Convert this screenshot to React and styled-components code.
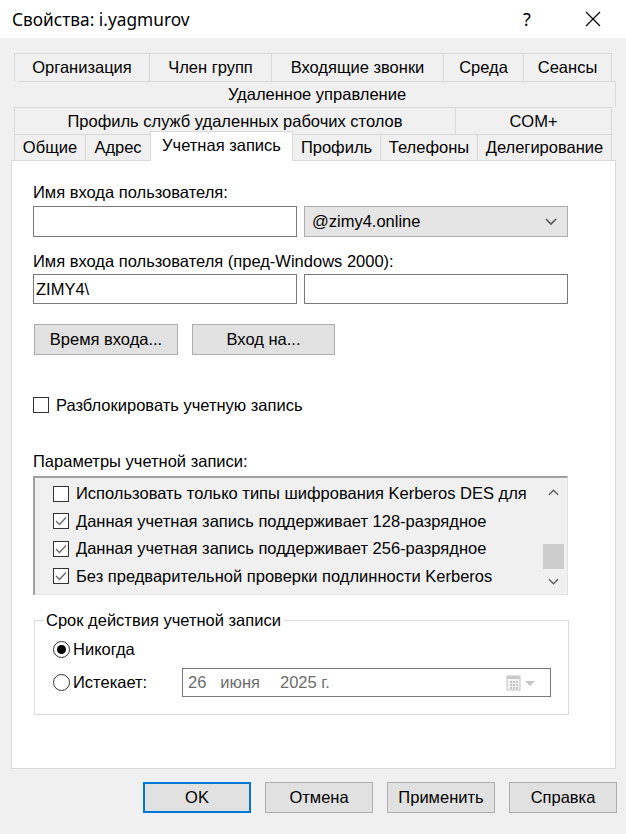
import React from 'react';
import styled, { createGlobalStyle } from 'styled-components';

const GlobalStyle = createGlobalStyle`
  html, body {
    margin: 0;
    padding: 0;
    background: #f0f0f0;
  }
  * {
    box-sizing: border-box;
  }
`;

const Window = styled.div`
  width: 626px;
  height: 834px;
  background: #f0f0f0;
  font-family: "Liberation Sans", Arial, sans-serif;
  font-size: 16.5px;
  color: #000;
  overflow: hidden;
`;

const TitleBar = styled.div`
  height: 38px;
  background: #fff;
  display: flex;
  align-items: center;
  padding-left: 12px;
`;

const Title = styled.div`
  flex: 1;
  font-family: "Noto Sans", "Open Sans", sans-serif;
  font-size: 17.3px;
  color: #000;
`;

const TitleButton = styled.div`
  width: 46px;
  height: 38px;
  display: flex;
  align-items: center;
  justify-content: center;
  font-family: "Noto Sans", sans-serif;
  font-size: 18px;
  margin-right: ${(p) => p.$mr || 0}px;
`;

const Tabs = styled.div`
  margin-top: 15px;
  display: flex;
  flex-direction: column;
`;

const TabRow = styled.div`
  display: flex;
  height: ${(p) => p.$h}px;
  margin-left: ${(p) => p.$ml || 14}px;
  width: 598px;
`;

const Tab = styled.div`
  width: ${(p) => p.$w}px;
  flex: ${(p) => (p.$w ? 'none' : 1)};
  display: flex;
  align-items: center;
  justify-content: center;
  border: 1px solid #d9d9d9;
  border-right: none;
  border-bottom: none;
  border-left-color: ${(p) => (p.$noLeft ? 'transparent' : '#d9d9d9')};
  background: #f0f0f0;
  white-space: nowrap;
  &:last-child {
    border-right: 1px solid #d9d9d9;
  }
`;

const ActiveTab = styled(Tab)`
  background: #fff;
  margin-top: -3px;
  height: 30px;
  padding-bottom: 3px;
  position: relative;
  z-index: 1;
  border-right: 1px solid #d9d9d9;
  & + div {
    border-left: none;
  }
`;

const Panel = styled.div`
  margin-left: 11px;
  width: 605px;
  height: 609px;
  background: #fff;
  border: 1px solid #d9d9d9;
  padding: 22px 0 0 21px;
`;

const Label = styled.div`
  height: 18px;
  line-height: 18px;
  margin-top: ${(p) => p.$mt || 0}px;
  white-space: nowrap;
`;

const FieldRow = styled.div`
  display: flex;
  gap: 7px;
  height: ${(p) => p.$h}px;
  margin-top: ${(p) => p.$mt}px;
`;

const TextInput = styled.div`
  width: 264px;
  height: 100%;
  border: 1px solid #7a7a7a;
  background: #fff;
  display: flex;
  align-items: center;
  padding-left: 2px;
`;

const Select = styled.div`
  width: 264px;
  height: 100%;
  border: 1px solid #adadad;
  background: #e5e5e5;
  display: flex;
  align-items: center;
  padding: 0 10px 0 7px;
  justify-content: space-between;
`;

const ButtonRow = styled.div`
  display: flex;
  gap: 14px;
  margin-top: ${(p) => p.$mt}px;
  justify-content: ${(p) => p.$justify || 'flex-start'};
  padding-right: ${(p) => p.$pr || 0}px;
  padding-left: ${(p) => p.$pl || 0}px;
`;

const Button = styled.div`
  width: ${(p) => p.$w}px;
  height: ${(p) => p.$h || 31}px;
  background: #e1e1e1;
  border: ${(p) => (p.$primary ? '2px solid #0078d7' : '1px solid #adadad')};
  display: flex;
  align-items: center;
  justify-content: center;
`;

const CheckRow = styled.div`
  display: flex;
  align-items: center;
  gap: 7px;
  height: ${(p) => p.$h || 18}px;
  margin-top: ${(p) => p.$mt || 0}px;
  white-space: nowrap;
`;

const Box = styled.div`
  width: 16px;
  height: 16px;
  flex: none;
  border: 1px solid #333;
  background: #fff;
  display: flex;
  align-items: center;
  justify-content: center;
`;

const ListBox = styled.div`
  margin-top: 6px;
  width: 535px;
  height: 119px;
  border-top: 2px solid #a0a0a0;
  border-left: 2px solid #a0a0a0;
  border-right: 1px solid #e3e3e3;
  border-bottom: 1px solid #e3e3e3;
  background: #f0f0f0;
  display: flex;
  overflow: hidden;
`;

const ListItems = styled.div`
  flex: 1;
  padding: 2px 0 0 18px;
  overflow: hidden;
`;

const ScrollBar = styled.div`
  width: 24px;
  margin-right: 2px;
  display: flex;
  flex-direction: column;
`;

const ScrollArrow = styled.div`
  height: ${(p) => p.$h}px;
  display: flex;
  align-items: center;
  justify-content: center;
`;

const ScrollTrack = styled.div`
  flex: 1;
  display: flex;
  flex-direction: column;
  justify-content: flex-end;
  align-items: center;
`;

const Thumb = styled.div`
  width: 21px;
  height: 25px;
  background: #cdcdcd;
`;

const Group = styled.fieldset`
  margin: 16px 0 0 1px;
  width: 535px;
  height: 104px;
  border: 1px solid #dcdcdc;
  padding: 11px 0 0 18px;
`;

const Legend = styled.legend`
  padding: 0 2px;
  margin-left: -9px;
  height: 18px;
  line-height: 18px;
`;

const Radio = styled.div`
  width: 17px;
  height: 17px;
  flex: none;
  border-radius: 50%;
  border: 1px solid #333;
  background: #fff;
  display: flex;
  align-items: center;
  justify-content: center;
  &::after {
    content: '';
    display: ${(p) => (p.$checked ? 'block' : 'none')};
    width: 9px;
    height: 9px;
    border-radius: 50%;
    background: #000;
  }
`;

const RadioRow = styled.div`
  display: flex;
  align-items: center;
  gap: 3px;
  height: ${(p) => p.$h}px;
  margin-top: ${(p) => p.$mt || 0}px;
`;

const RadioLabel = styled.div`
  width: ${(p) => p.$w || 'auto'};
`;

const DatePicker = styled.div`
  width: 369px;
  height: 29px;
  border: 1px solid #7a7a7a;
  background: #fff;
  display: flex;
  align-items: center;
  padding: 0 12px 0 5px;
  color: #6d6d6d;
  gap: 6px;
`;

const DatePart = styled.span`
  margin-right: ${(p) => p.$mr}px;
`;

const Spacer = styled.div`
  flex: 1;
`;

const Check = () => (
  <svg width="12" height="10" viewBox="0 0 12 10">
    <polyline points="1,5 4.5,8.5 11,1.5" fill="none" stroke="#6a6a6a" strokeWidth="1.4" />
  </svg>
);

const Chevron = ({ up, color = '#555', w = 12 }) => (
  <svg width={w} height="8" viewBox="0 0 12 8">
    <polyline
      points={up ? '1,7 6,2 11,7' : '1,1 6,6 11,1'}
      fill="none"
      stroke={color}
      strokeWidth="1.6"
    />
  </svg>
);

const CalendarIcon = () => (
  <svg width="32" height="18" viewBox="0 0 32 18">
    <rect x="1" y="2" width="13" height="14" fill="#f4f4f4" stroke="#c4c4c4" />
    <rect x="1" y="2" width="13" height="3" fill="#c9c9c9" />
    {[4, 7, 10].map((x) =>
      [7, 10, 13].map((y) => (
        <rect key={`${x}-${y}`} x={x} y={y} width="2" height="2" fill="#c4c4c4" />
      ))
    )}
    <polygon points="19,7 29,7 24,12" fill="#c4c4c4" />
  </svg>
);

const listItems = [
  { text: 'Использовать только типы шифрования Kerberos DES для', checked: false },
  { text: 'Данная учетная запись поддерживает 128-разрядное', checked: true },
  { text: 'Данная учетная запись поддерживает 256-разрядное', checked: true },
  { text: 'Без предварительной проверки подлинности Kerberos', checked: true },
];

const ListRow = styled(CheckRow)`
  height: 27.5px;
`;

function App() {
  return (
    <Window>
      <GlobalStyle />
      <TitleBar>
        <Title>Свойства: i.yagmurov</Title>
        <TitleButton $mr={20}>?</TitleButton>
        <TitleButton $mr={10}>
          <svg width="16" height="16" viewBox="0 0 16 16">
            <path d="M1 1 L15 15 M15 1 L1 15" stroke="#000" strokeWidth="1.2" />
          </svg>
        </TitleButton>
      </TitleBar>

      <Tabs>
        <TabRow $h={28}>
          <Tab $w={135}>Организация</Tab>
          <Tab $w={122}>Член групп</Tab>
          <Tab $w={172}>Входящие звонки</Tab>
          <Tab $w={80}>Среда</Tab>
          <Tab $w={89}>Сеансы</Tab>
        </TabRow>
        <TabRow $h={26} $ml={18}>
          <Tab $noLeft>Удаленное управление</Tab>
        </TabRow>
        <TabRow $h={27}>
          <Tab $w={441}>Профиль служб удаленных рабочих столов</Tab>
          <Tab $w={157}>COM+</Tab>
        </TabRow>
        <TabRow $h={26}>
          <Tab $w={71}>Общие</Tab>
          <Tab $w={65}>Адрес</Tab>
          <ActiveTab $w={143}>Учетная запись</ActiveTab>
          <Tab $w={87}>Профиль</Tab>
          <Tab $w={97}>Телефоны</Tab>
          <Tab $w={135}>Делегирование</Tab>
        </TabRow>
      </Tabs>

      <Panel>
        <Label>Имя входа пользователя:</Label>
        <FieldRow $h={31} $mt={5}>
          <TextInput />
          <Select>
            <span>@zimy4.online</span>
            <Chevron />
          </Select>
        </FieldRow>

        <Label $mt={15}>Имя входа пользователя (пред-Windows 2000):</Label>
        <FieldRow $h={30} $mt={4}>
          <TextInput>ZIMY4\</TextInput>
          <TextInput />
        </FieldRow>

        <ButtonRow $mt={20} $pl={1}>
          <Button $w={144}>Время входа...</Button>
          <Button $w={143}>Вход на...</Button>
        </ButtonRow>

        <CheckRow $mt={41}>
          <Box />
          <span>Разблокировать учетную запись</span>
        </CheckRow>

        <Label $mt={38}>Параметры учетной записи:</Label>
        <ListBox>
          <ListItems>
            {listItems.map((item) => (
              <ListRow key={item.text}>
                <Box>{item.checked && <Check />}</Box>
                <span>{item.text}</span>
              </ListRow>
            ))}
          </ListItems>
          <ScrollBar>
            <ScrollArrow $h={27}>
              <Chevron up color="#606060" w={11} />
            </ScrollArrow>
            <ScrollTrack>
              <Thumb />
            </ScrollTrack>
            <ScrollArrow $h={25}>
              <Chevron color="#606060" w={11} />
            </ScrollArrow>
          </ScrollBar>
        </ListBox>

        <Group>
          <Legend>Срок действия учетной записи</Legend>
          <RadioRow $h={18}>
            <Radio $checked />
            <span>Никогда</span>
          </RadioRow>
          <RadioRow $h={29} $mt={10}>
            <Radio />
            <RadioLabel $w="106px">Истекает:</RadioLabel>
            <DatePicker>
              <DatePart $mr={8}>26</DatePart>
              <DatePart $mr={14}>июня</DatePart>
              <DatePart $mr={0}>2025 г.</DatePart>
              <Spacer />
              <CalendarIcon />
            </DatePicker>
          </RadioRow>
        </Group>
      </Panel>

      <ButtonRow $mt={13} $justify="flex-end" $pr={9}>
        <Button $w={108} $primary>OK</Button>
        <Button $w={108}>Отмена</Button>
        <Button $w={108}>Применить</Button>
        <Button $w={108}>Справка</Button>
      </ButtonRow>
    </Window>
  );
}

export default App;
